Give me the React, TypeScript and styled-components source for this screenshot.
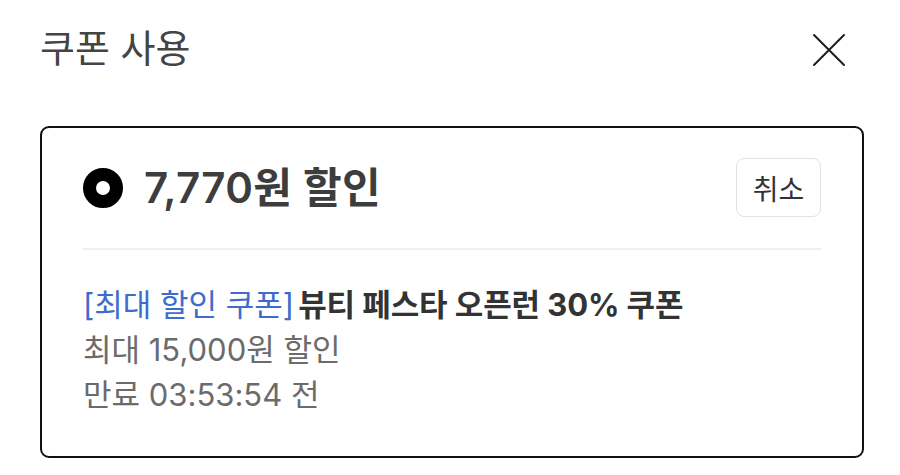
import React from "react";
import styled, { createGlobalStyle } from "styled-components";

const Global = createGlobalStyle`
  html, body { margin: 0; padding: 0; background: #ffffff; }
  body { font-family: "Inter", "Noto Sans CJK KR", "Noto Sans", sans-serif; }
  * { box-sizing: border-box; }
`;

const Page = styled.div`
  width: 900px;
  height: 475px;
  padding: 0 36px 0 40px;
  background: #ffffff;
`;

const Header = styled.div`
  height: 100px;
  display: flex;
  align-items: center;
  justify-content: space-between;
`;

const Title = styled.h1`
  margin: 0;
  font-size: 38px;
  font-weight: 400;
  color: #444444;
  line-height: 1;
  margin-top: -4px;
`;

const CloseButton = styled.button`
  width: 34px;
  height: 34px;
  margin-right: 18px;
  padding: 0;
  border: none;
  background: transparent;
  display: flex;
  align-items: center;
  justify-content: center;
`;

const Card = styled.div`
  margin-top: 26px;
  border: 2px solid #111111;
  border-radius: 9px;
  padding: 30px 41px 39px 41px;
`;

const TopRow = styled.div`
  display: flex;
  align-items: center;
  justify-content: space-between;
  height: 59px;
`;

const Amount = styled.div`
  display: flex;
  align-items: center;
  gap: 21px;
`;

const Radio = styled.span`
  width: 40px;
  height: 40px;
  border-radius: 50%;
  border: 13.5px solid #000000;
  background: #ffffff;
  flex: none;
`;

const AmountText = styled.span`
  font-size: 42px;
  font-weight: 600;
  color: #3d3d3d;
  line-height: 1;
  letter-spacing: 0.3px;
`;

const CancelButton = styled.button`
  width: 85px;
  height: 59px;
  border: 1.5px solid #e2e2e2;
  border-radius: 8px;
  background: #ffffff;
  font-family: inherit;
  font-size: 28px;
  font-weight: 400;
  color: #333333;
  padding: 0;
`;

const Divider = styled.div`
  height: 1.5px;
  background: #f0f0f0;
  margin: 31px 0 32px;
`;

const InfoLine = styled.div<{ $tone?: "main" | "sub" }>`
  font-size: 31px;
  line-height: 45px;
  color: ${(p) => (p.$tone === "main" ? "#333333" : "#6b6b6b")};
  font-weight: 400;
  white-space: nowrap;
`;

const Tag = styled.span`
  color: #3d6ccc;
  font-weight: 400;
  margin-right: 4px;
`;

const CouponName = styled.span`
  font-weight: 700;
  color: #333333;
  letter-spacing: -0.1px;
`;

export default function App() {
  return (
    <>
      <Global />
      <Page>
        <Header>
          <Title>쿠폰 사용</Title>
          <CloseButton aria-label="닫기">
            <svg width="34" height="34" viewBox="0 0 34 34">
              <path d="M2 2 L32 32 M32 2 L2 32" stroke="#1e1e1e" strokeWidth="2" strokeLinecap="round" />
            </svg>
          </CloseButton>
        </Header>
        <Card>
          <TopRow>
            <Amount>
              <Radio />
              <AmountText>7,770원 할인</AmountText>
            </Amount>
            <CancelButton>취소</CancelButton>
          </TopRow>
          <Divider />
          <InfoLine $tone="main">
            <Tag>[최대 할인 쿠폰]</Tag>
            <CouponName>뷰티 페스타 오픈런 30% 쿠폰</CouponName>
          </InfoLine>
          <InfoLine>최대 15,000원 할인</InfoLine>
          <InfoLine>만료 03:53:54 전</InfoLine>
        </Card>
      </Page>
    </>
  );
}
